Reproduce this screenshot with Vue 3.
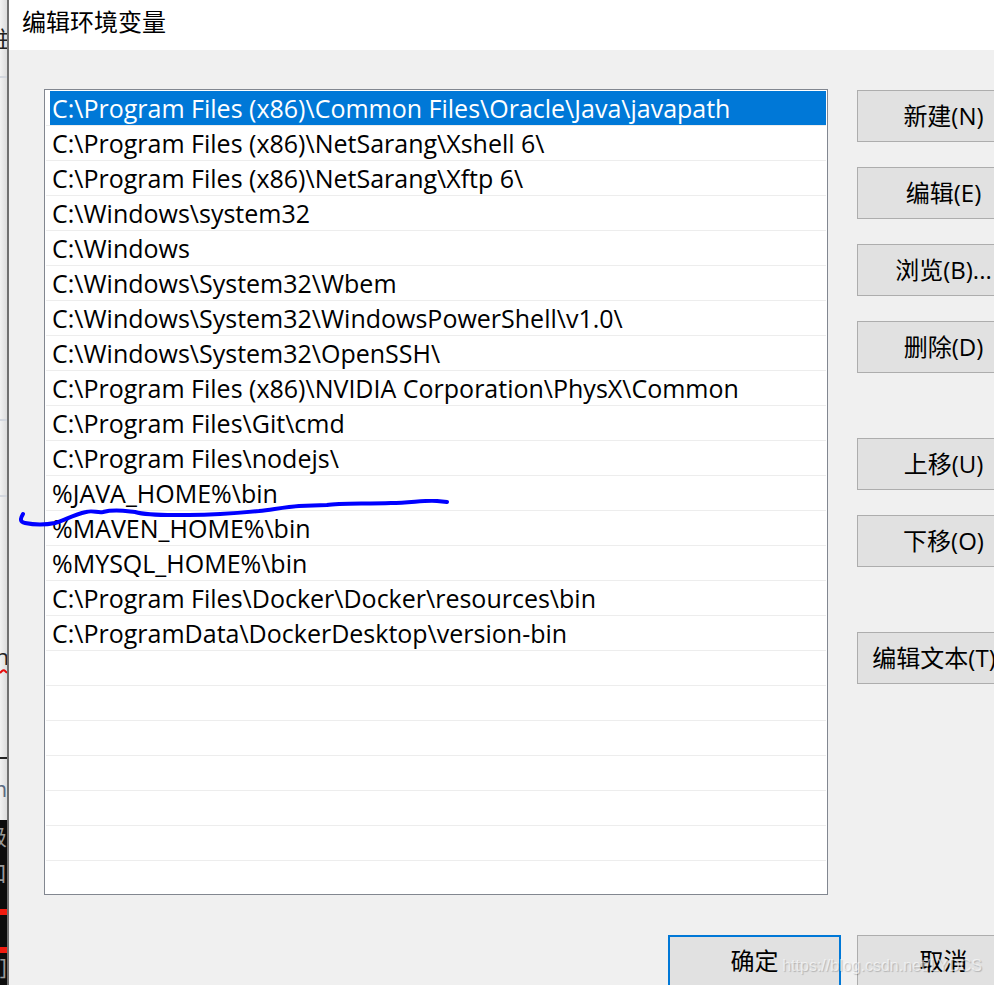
<script setup>
import { ref } from 'vue'

const paths = [
  'C:\\Program Files (x86)\\Common Files\\Oracle\\Java\\javapath',
  'C:\\Program Files (x86)\\NetSarang\\Xshell 6\\',
  'C:\\Program Files (x86)\\NetSarang\\Xftp 6\\',
  'C:\\Windows\\system32',
  'C:\\Windows',
  'C:\\Windows\\System32\\Wbem',
  'C:\\Windows\\System32\\WindowsPowerShell\\v1.0\\',
  'C:\\Windows\\System32\\OpenSSH\\',
  'C:\\Program Files (x86)\\NVIDIA Corporation\\PhysX\\Common',
  'C:\\Program Files\\Git\\cmd',
  'C:\\Program Files\\nodejs\\',
  '%JAVA_HOME%\\bin',
  '%MAVEN_HOME%\\bin',
  '%MYSQL_HOME%\\bin',
  'C:\\Program Files\\Docker\\Docker\\resources\\bin',
  'C:\\ProgramData\\DockerDesktop\\version-bin',
  '', '', '', '', '', '', ''
]
const selected = ref(0)

const groups = [
  ['新建(N)', '编辑(E)', '浏览(B)...', '删除(D)'],
  ['上移(U)', '下移(O)'],
  ['编辑文本(T)...']
]
</script>

<template>
  <div class="screen">
    <div class="behind" aria-hidden="true">
      <div class="pane pane-tab"><span class="frag frag-tab">注</span></div>
      <div class="pane pane-tools"></div>
      <div class="pane pane-mid"></div>
      <div class="pane pane-doc">
        <span class="frag frag-n">n</span>
        <svg class="squiggle" viewBox="0 0 8 6"><path d="M0 4 L2 2 Q4 0 6 3 L8 4" fill="none" stroke="#e80c0c" stroke-width="2" /></svg>
      </div>
      <div class="pane pane-line"><span class="frag frag-m">m</span></div>
      <div class="pane pane-term">
        <span class="frag frag-t1">级</span>
        <span class="frag frag-t2">口</span>
        <i class="red"></i>
        <i class="red red-low"></i>
        <span class="frag frag-t3">]</span>
      </div>
    </div>

    <section class="dialog" aria-labelledby="dialog-title">
      <header class="title-bar"><h1 id="dialog-title">编辑环境变量</h1></header>
      <div class="content">
        <div class="main-row">
          <ul class="list" role="listbox" aria-label="编辑环境变量">
            <li
              v-for="(p, i) in paths"
              :key="i"
              class="row"
              role="option"
              :aria-selected="selected === i"
              @click="p && (selected = i)"
            >
              <span class="cell" :class="{ active: selected === i }">{{ p }}</span>
            </li>
          </ul>
          <div class="side">
            <div v-for="(g, i) in groups" :key="i" class="group">
              <button v-for="b in g" :key="b" type="button" class="btn">{{ b }}</button>
            </div>
          </div>
        </div>
        <footer class="footer">
          <button type="button" class="btn primary">确定</button>
          <button type="button" class="btn">取消</button>
        </footer>
      </div>
      <svg class="ink" viewBox="0 0 440 40" aria-hidden="true">
        <path
          d="M4 15 C1 20 1 23 6 24 C16 26 26 26 36 24 C46 21 54 16 67 13 C74 11 78 14 84 13 C96 10 106 12 116 13 C130 17 150 16 170 16 C196 16 220 14 240 12 C256 10 268 8 280 7 L308 6 C320 4 346 5 372 4 C392 4 404 1 418 2 L428 3"
          fill="none" stroke="#0000ff" stroke-width="4" stroke-linecap="round" stroke-linejoin="round"
        />
      </svg>
    </section>
    <span class="watermark">https://blog.csdn.net/LYDCS</span>
  </div>
</template>

<style>
body {
  margin: 0;
  background: #f0f0f0;
}
</style>

<style scoped>
.screen {
  position: relative;
  display: flex;
  height: 100vh;
  overflow: hidden;
  background: #f0f0f0;
  color: #000;
  font: 25px/34px "Open Sans", "Noto Sans CJK SC", sans-serif;
  font-kerning: none;
}
.behind {
  display: flex;
  flex-direction: column;
  flex: 0 0 7px;
  border-right: 2px solid #707070;
  overflow: hidden;
}
.pane {
  position: relative;
  flex: none;
  box-sizing: border-box;
  overflow: hidden;
  background: linear-gradient(to right, #f2f2f2, #dcdcdc);
}
.pane-tab { height: 78px; border-bottom: 2px solid #d3d7de; }
.pane-tools { height: 343px; border-bottom: 2px solid #d3d7de; }
.pane-mid { height: 76px; border-bottom: 2px solid #d3d7de; }
.pane-doc { height: 262px; border-bottom: 2px solid #222; }
.pane-line { height: 61px; }
.pane-term { flex: 1; background: #0c0c0c; }
.frag {
  position: absolute;
  right: 0;
  line-height: 24px;
  font-size: 22px;
  color: #222;
}
.frag-tab { top: 26px; right: -4px; }
.frag-n { top: 147px; right: -2px; }
.squiggle { position: absolute; left: 0; top: 172px; width: 8px; height: 6px; }
.frag-m { top: 17px; color: #5a6a80; }
.frag-t1 { top: 4px; color: #999; }
.frag-t2 { top: 40px; color: #999; }
.frag-t3 { top: 134px; color: #999; }
.red {
  position: absolute;
  left: 0;
  top: 89px;
  width: 100%;
  height: 6px;
  background: #f01c10;
}
.red-low { top: 127px; }
.dialog {
  position: relative;
  flex: 1;
  min-width: 0;
}
.title-bar {
  height: 50px;
  box-sizing: border-box;
  padding: 5px 13px;
  background: #fff;
}
h1 {
  margin: 0;
  font-size: 24px;
  font-weight: 400;
  line-height: 34px;
}
.content {
  padding: 39px 0 0 35px;
  margin-right: -36px;
}
.main-row {
  display: flex;
  gap: 29px;
}
.list {
  flex: 1;
  min-width: 0;
  margin: 0;
  padding: 1px 1px 0;
  list-style: none;
  background: #fff;
  border: 1px solid #828790;
}
.row {
  height: 34px;
  padding-left: 4px;
  border-bottom: 1px solid #ededed;
}
.row:last-child {
  height: 33px;
  border-bottom: 0;
}
.cell {
  display: block;
  height: 34px;
  padding: 0 2px;
  line-height: 34px;
  white-space: pre;
  overflow: hidden;
}
.cell.active {
  background: #0078d7;
  color: #fff;
}
.side {
  display: flex;
  flex-direction: column;
  gap: 65px;
  flex: 0 0 173px;
  padding-top: 1px;
}
.group {
  display: flex;
  flex-direction: column;
  gap: 25px;
}
.btn {
  width: 173px;
  height: 52px;
  box-sizing: border-box;
  padding: 0;
  border: 1px solid #adadad;
  border-radius: 0;
  background: #e1e1e1;
  color: #000;
  font: inherit;
  font-size: 24px;
  white-space: nowrap;
}
.btn.primary { border: 2px solid #0078d7; }
.footer {
  display: flex;
  justify-content: flex-end;
  gap: 16px;
  padding-top: 40px;
}
.ink {
  position: absolute;
  left: 10px;
  top: 499px;
  width: 440px;
  height: 40px;
  pointer-events: none;
}
.watermark {
  position: absolute;
  right: 12px;
  bottom: 8px;
  font: 16px/22px "Liberation Sans", sans-serif;
  color: rgba(255, 255, 255, 0.6);
  text-shadow: 1px 1px 1px rgba(0, 0, 0, 0.2);
  pointer-events: none;
}
</style>
